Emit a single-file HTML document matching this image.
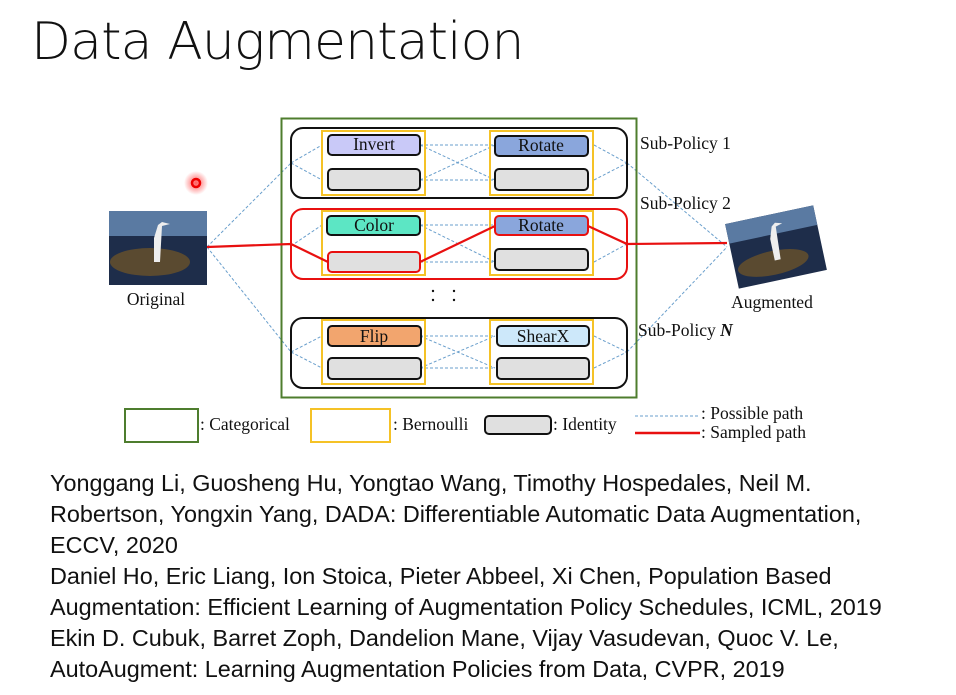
<!DOCTYPE html>
<html><head><meta charset="utf-8"><style>
html,body{margin:0;padding:0;background:#fff;width:956px;height:695px;overflow:hidden}
.t{position:absolute;left:31px;top:12px;font:52px "DejaVu Sans","Liberation Sans",sans-serif;font-weight:200;color:#111;letter-spacing:-0.9px}
.r{position:absolute;left:50px;font:23.4px "Liberation Sans",sans-serif;color:#111;white-space:nowrap}
svg{position:absolute;left:0;top:0}
svg text{font-family:"Liberation Serif",serif;font-size:17.5px;fill:#111}
</style></head><body>
<div class="t">Data Augmentation</div>
<svg width="956" height="695">
<defs><radialGradient id="g"><stop offset="0" stop-color="#f33" stop-opacity=".8"/><stop offset="1" stop-color="#f33" stop-opacity="0"/></radialGradient></defs>
<circle cx="196" cy="183" r="12" fill="url(#g)"/><circle cx="196" cy="183" r="4" fill="none" stroke="#e00" stroke-width="2.5"/>
<g stroke="#6a9fcc" stroke-width="1" stroke-dasharray="3,2" fill="none">
<path d="M207 247 L291 163 M207 247 L291 352 M291 163 L322 145 M291 163 L322 180 M291 246 L322 225 M291 352 L322 336 M291 352 L322 368"/>
<path d="M420 145 L495 145 M420 180 L495 180 M420 145 L495 180 M420 180 L495 145"/>
<path d="M420 225 L495 225 M420 262 L495 262 M420 225 L495 262"/>
<path d="M420 336 L495 336 M420 368 L495 368 M420 336 L495 368 M420 368 L495 336"/>
<path d="M594 145 L627 163 M594 180 L627 163 M594 336 L627 352 M594 368 L627 352 M594 262 L627 244"/>
<path d="M627 163 L727 247 M627 352 L727 247"/>
</g>
<rect x="281.5" y="118.5" width="355" height="279" fill="none" stroke="#4e7d2e" stroke-width="2"/>
<rect x="291" y="128" width="336" height="70" rx="12" fill="none" stroke="#111" stroke-width="2"/>
<rect x="291" y="209" width="336" height="70" rx="12" fill="none" stroke="#e81010" stroke-width="2"/>
<rect x="291" y="318" width="336" height="70" rx="12" fill="none" stroke="#111" stroke-width="2"/>
<g fill="none" stroke="#f5c226" stroke-width="2">
<rect x="322" y="131" width="103" height="64"/><rect x="490" y="131" width="103" height="64"/>
<rect x="322" y="211" width="103" height="64"/><rect x="490" y="211" width="103" height="64"/>
<rect x="322" y="320" width="103" height="64"/><rect x="490" y="320" width="103" height="64"/>
</g>
<g stroke="#111" stroke-width="2">
<rect x="328" y="135" width="92" height="20" rx="4" fill="#c9c9f8"/>
<rect x="328" y="169" width="92" height="21" rx="4" fill="#e0e0e0"/>
<rect x="495" y="136" width="93" height="20" rx="4" fill="#8aa6dc"/>
<rect x="495" y="169" width="93" height="21" rx="4" fill="#e0e0e0"/>
<rect x="327" y="216" width="93" height="19" rx="4" fill="#5ce6c4"/>
<rect x="495" y="249" width="93" height="21" rx="4" fill="#e0e0e0"/>
<rect x="328" y="326" width="93" height="20" rx="4" fill="#f2a56e"/>
<rect x="328" y="358" width="93" height="21" rx="4" fill="#e0e0e0"/>
<rect x="497" y="326" width="92" height="20" rx="4" fill="#cde8fa"/>
<rect x="497" y="358" width="92" height="21" rx="4" fill="#e0e0e0"/>
</g>
<rect x="328" y="252" width="92" height="20" rx="4" fill="#e0e0e0" stroke="#e81010" stroke-width="2"/>
<rect x="495" y="216" width="93" height="19" rx="4" fill="#8aa6dc" stroke="#e81010" stroke-width="2"/>
<path d="M207 247 L291 244 L328 262 M420 262 L495 226 M588 226 L627 244 L727 243" fill="none" stroke="#e81010" stroke-width="2.2"/>
<g text-anchor="middle">
<text x="374" y="150">Invert</text><text x="541" y="151">Rotate</text>
<text x="374" y="231">Color</text><text x="541" y="231">Rotate</text>
<text x="374" y="342">Flip</text><text x="543" y="342">ShearX</text>
<text x="156" y="305">Original</text><text x="772" y="308">Augmented</text>
</g>
<text x="640" y="149">Sub-Policy 1</text>
<text x="640" y="209">Sub-Policy 2</text>
<text x="638" y="336">Sub-Policy <tspan font-style="italic" font-weight="bold">N</tspan></text>
<g fill="#111"><circle cx="433" cy="291" r="1.2"/><circle cx="433" cy="300" r="1.2"/><circle cx="454" cy="291" r="1.2"/><circle cx="454" cy="300" r="1.2"/></g>
<rect x="109" y="211" width="98" height="74" fill="#1e2d4a"/>
<rect x="109" y="211" width="98" height="25" fill="#5a7aa2"/>
<ellipse cx="150" cy="262" rx="40" ry="14" fill="#5a4a30"/>
<path d="M158 225 L162 222 L170 224 L162 226 L160 262 L154 262 L154 238 Z" fill="#eee"/>
<g transform="rotate(-12 776 247)"><rect x="731" y="214" width="90" height="66" fill="#1e2d4a"/><rect x="731" y="214" width="90" height="20" fill="#5a7aa2"/><ellipse cx="770" cy="262" rx="36" ry="12" fill="#5a4a30"/><path d="M776 226 L780 223 L787 225 L780 227 L778 260 L772 260 L772 238 Z" fill="#eee"/></g>
<rect x="125" y="409" width="73" height="33" fill="none" stroke="#4e7d2e" stroke-width="2"/>
<text x="200" y="430">: Categorical</text>
<rect x="311" y="409" width="79" height="33" fill="none" stroke="#f5c226" stroke-width="2"/>
<text x="393" y="430">: Bernoulli</text>
<rect x="485" y="416" width="66" height="18" rx="4" fill="#e0e0e0" stroke="#111" stroke-width="2"/>
<text x="553" y="430">: Identity</text>
<path d="M635 416 L700 416" stroke="#6a9fcc" stroke-dasharray="3,2"/>
<path d="M635 433 L700 433" stroke="#e81010" stroke-width="2.5"/>
<text x="701" y="419">: Possible path</text>
<text x="701" y="438">: Sampled path</text>
</svg>
<div class="r" style="top:470px">Yonggang Li, Guosheng Hu, Yongtao Wang, Timothy Hospedales, Neil M.</div>
<div class="r" style="top:501px">Robertson, Yongxin Yang, DADA: Differentiable Automatic Data Augmentation,</div>
<div class="r" style="top:532px">ECCV, 2020</div>
<div class="r" style="top:563px">Daniel Ho, Eric Liang, Ion Stoica, Pieter Abbeel, Xi Chen, Population Based</div>
<div class="r" style="top:594px">Augmentation: Efficient Learning of Augmentation Policy Schedules, ICML, 2019</div>
<div class="r" style="top:625px">Ekin D. Cubuk, Barret Zoph, Dandelion Mane, Vijay Vasudevan, Quoc V. Le,</div>
<div class="r" style="top:656px">AutoAugment: Learning Augmentation Policies from Data, CVPR, 2019</div>
</body></html>
